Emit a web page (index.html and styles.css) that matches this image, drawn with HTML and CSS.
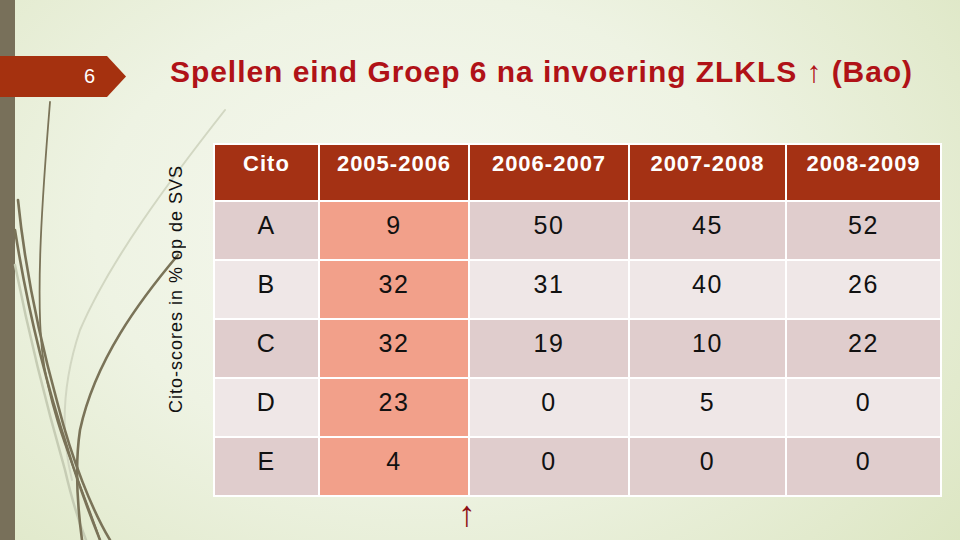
FILE: index.html
```html
<!DOCTYPE html>
<html lang="nl">
<head>
<meta charset="utf-8">
<title>Spellen eind Groep 6</title>
<link rel="stylesheet" href="styles.css">
</head>
<body>
<div class="slide">
  <svg class="deco" width="960" height="540" viewBox="0 0 960 540" aria-hidden="true">
    <path class="soft faint" d="M225,110 C170,180 110,260 80,330 C60,390 62,440 72,480"/>
    <path class="soft" d="M15,265 C28,330 45,400 65,470 C72,500 80,525 86,540"/>
    <path class="dark thin" d="M50,102 C42,200 36,290 42,350 C50,420 80,480 100,540"/>
    <path class="dark" d="M18,200 C25,270 40,340 58,405 C72,460 92,510 110,540"/>
    <path class="dark" d="M15,230 C26,300 45,380 68,450 C80,490 92,520 100,540"/>
    <path class="dark" d="M178,255 C140,300 95,360 80,430 C74,470 78,510 82,540"/>
  </svg>
  <header class="head">
    <div class="tab">6</div>
    <h1 class="title">Spellen eind Groep 6 na invoering ZLKLS ↑ (Bao)</h1>
  </header>
  <main class="main">
    <div class="side-label">Cito-scores in % op de SVS</div>
    <div class="table-wrap">
      <table class="scores">
        <colgroup>
          <col class="c1"><col class="c2"><col class="c3"><col class="c4"><col class="c5">
        </colgroup>
        <thead>
          <tr><th>Cito</th><th>2005-2006</th><th>2006-2007</th><th>2007-2008</th><th>2008-2009</th></tr>
        </thead>
        <tbody>
          <tr class="odd"><td>A</td><td class="hl">9</td><td>50</td><td>45</td><td>52</td></tr>
          <tr class="even"><td>B</td><td class="hl">32</td><td>31</td><td>40</td><td>26</td></tr>
          <tr class="odd"><td>C</td><td class="hl">32</td><td>19</td><td>10</td><td>22</td></tr>
          <tr class="even"><td>D</td><td class="hl">23</td><td>0</td><td>5</td><td>0</td></tr>
          <tr class="odd"><td>E</td><td class="hl">4</td><td>0</td><td>0</td><td>0</td></tr>
        </tbody>
      </table>
      <div class="below">↑</div>
    </div>
  </main>
</div>
</body>
</html>
```

FILE: styles.css
```css
html, body {
  margin: 0;
  padding: 0;
}

body {
  font-family: "Liberation Sans", Arial, sans-serif;
}

.slide {
  position: relative;
  width: 960px;
  height: 540px;
  overflow: hidden;
  background:
    linear-gradient(to right, #78705a 0, #78705a 15px, transparent 15px),
    radial-gradient(ellipse 720px 520px at 420px 230px, #f6f8f0 0%, #eef3e3 45%, #e2eacd 80%, #dbe5c0 100%);
}

.deco {
  position: absolute;
  left: 0;
  top: 0;
  z-index: 0;
}

.deco path {
  fill: none;
  stroke-linecap: round;
}

.deco .dark {
  stroke: #7a7358;
  stroke-width: 2.6;
}

.deco .dark.thin {
  stroke-width: 1.8;
}

.deco .soft {
  stroke: #c6ccb4;
  stroke-width: 2.5;
}

.deco .soft.faint {
  stroke: #d2d7c2;
  stroke-width: 2;
}

.head {
  position: relative;
  z-index: 1;
  display: flex;
  align-items: flex-start;
  padding-top: 54px;
}

.tab {
  width: 126px;
  height: 41px;
  margin-top: 2px;
  box-sizing: border-box;
  padding-right: 31px;
  background: #a5310f;
  color: #ffffff;
  font-size: 20px;
  line-height: 41px;
  text-align: right;
  clip-path: polygon(0 0, 107px 0, 126px 50%, 107px 100%, 0 100%);
}

.title {
  margin: 0 0 0 44px;
  font-size: 30px;
  line-height: 36px;
  font-weight: bold;
  letter-spacing: 0.95px;
  color: #b01217;
  white-space: nowrap;
}

.main {
  position: relative;
  z-index: 1;
  display: flex;
  align-items: flex-start;
  margin-top: 46px;
  padding-left: 165px;
}

.side-label {
  writing-mode: vertical-rl;
  transform: rotate(180deg);
  font-size: 18px;
  line-height: 22px;
  letter-spacing: 1px;
  color: #111111;
  margin-top: 22px;
  white-space: nowrap;
}

.table-wrap {
  margin-left: 26px;
}

.scores {
  border-collapse: collapse;
  table-layout: fixed;
  width: 727px;
}

.c1 { width: 105px; }
.c2 { width: 150px; }
.c3 { width: 160px; }
.c4 { width: 157px; }
.c5 { width: 155px; }

.scores thead tr {
  height: 57px;
}

.scores tbody tr {
  height: 59px;
}

.scores th,
.scores td {
  border: 2px solid #ffffff;
  padding: 0;
  text-align: center;
  vertical-align: top;
}

.scores th {
  padding-top: 6px;
  background: #a43114;
  color: #ffffff;
  font-size: 22px;
  line-height: 26px;
  letter-spacing: 1px;
  font-weight: bold;
}

.scores td {
  padding-top: 9px;
  font-size: 25px;
  line-height: 29px;
  letter-spacing: 1.5px;
  color: #111111;
}

.scores tr.odd td {
  background: #e0cdcd;
}

.scores tr.even td {
  background: #efe7e7;
}

.scores tr td.hl {
  background: #f2a08a;
}

.below {
  padding-left: 245px;
  font-size: 36px;
  line-height: 34px;
  color: #8e1014;
}
```
